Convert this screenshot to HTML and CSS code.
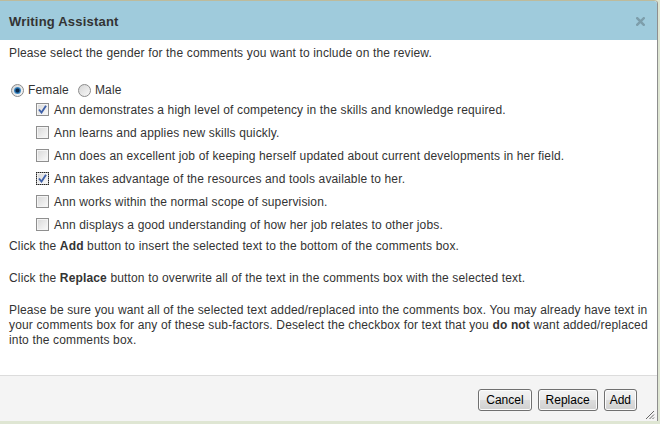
FILE: index.html
```html
<!DOCTYPE html>
<html lang="en">
<head>
<meta charset="utf-8">
<title>Writing Assistant</title>
<link rel="stylesheet" href="styles.css">
</head>
<body>
<div class="dialog">
  <div class="titlebar">
    <span class="title">Writing Assistant</span>
    <svg class="close" width="9" height="9" viewBox="0 0 9 9"><path d="M1.2 1.2 L7.8 7.8 M7.8 1.2 L1.2 7.8" stroke="#7d9eab" stroke-width="2.4" stroke-linecap="square"/></svg>
  </div>
  <div class="content">
    <p class="intro">Please select the gender for the comments you want to include on the review.</p>
    <div class="gender">
      <span class="radio checked"><span class="dot"></span></span>
      <span class="rlabel">Female</span>
      <span class="radio"></span>
      <span class="rlabel">Male</span>
    </div>
    <ul class="options">
      <li class="opt"><span class="cb checked"><svg width="9" height="9" viewBox="0 0 9 9"><path d="M1 4.5 L3.5 7.5 L8 0.8" fill="none" stroke="#3d5fa8" stroke-width="1.9"/></svg></span>Ann demonstrates a high level of competency in the skills and knowledge required.</li>
      <li class="opt"><span class="cb"></span>Ann learns and applies new skills quickly.</li>
      <li class="opt"><span class="cb"></span>Ann does an excellent job of keeping herself updated about current developments in her field.</li>
      <li class="opt"><span class="cb checked focus"><svg width="9" height="9" viewBox="0 0 9 9"><path d="M1 4.5 L3.5 7.5 L8 0.8" fill="none" stroke="#3d5fa8" stroke-width="1.9"/></svg></span>Ann takes advantage of the resources and tools available to her.</li>
      <li class="opt"><span class="cb"></span>Ann works within the normal scope of supervision.</li>
      <li class="opt"><span class="cb"></span>Ann displays a good understanding of how her job relates to other jobs.</li>
    </ul>
    <p class="note first">Click the <b>Add</b> button to insert the selected text to the bottom of the comments box.</p>
    <p class="note">Click the <b>Replace</b> button to overwrite all of the text in the comments box with the selected text.</p>
    <p class="note">Please be sure you want all of the selected text added/replaced into the comments box. You may already have text in your comments box for any of these sub-factors. Deselect the checkbox for text that you <b>do not</b> want added/replaced into the comments box.</p>
  </div>
  <div class="footer">
    <button class="btn">Cancel</button>
    <button class="btn">Replace</button>
    <button class="btn narrow">Add</button>
    <svg class="grip" width="11" height="11" viewBox="0 0 11 11"><path d="M10 2 L2 10 M10 5.5 L5.5 10 M10 8.5 L8.5 10" stroke="#666" stroke-width="1"/></svg>
  </div>
</div>
</body>
</html>
```
FILE: styles.css
```css
html, body {
  margin: 0;
  padding: 0;
}
body {
  width: 660px;
  height: 424px;
  overflow: hidden;
  background: #dfe6d3;
  font-family: "Liberation Sans", Arial, sans-serif;
  font-size: 12px;
  color: #333;
}
.dialog {
  width: 657px;
  height: 420px;
  background: #fff;
  border-top: 1px solid #bdbb9c;
  border-right: 1px solid #8e8e8e;
  border-top-right-radius: 4px;
  display: flex;
  flex-direction: column;
  overflow: hidden;
  position: relative;
}
.titlebar {
  height: 39px;
  flex: none;
  background: #9fcbdc;
  display: flex;
  align-items: center;
  justify-content: space-between;
  padding: 0 12px 0 9px;
}
.title {
  font-weight: bold;
  font-size: 13px;
  letter-spacing: 0.2px;
  color: #333;
  margin-top: 1px;
}
.close {
  display: block;
  margin-top: 1px;
}
.content {
  flex: 1;
  padding: 6px 9px 0 9px;
  letter-spacing: 0.15px;
}
p {
  margin: 0;
}
.intro {
  line-height: 15px;
}
.gender {
  margin-top: 21px;
  height: 16px;
  display: flex;
  align-items: center;
  padding-left: 2px;
}
.radio {
  width: 11px;
  height: 11px;
  border: 1px solid #8b8b8b;
  border-radius: 50%;
  background: linear-gradient(135deg, #d6d6d6, #f8f8f8);
  display: flex;
  align-items: center;
  justify-content: center;
  flex: none;
}
.radio .dot {
  width: 7px;
  height: 7px;
  border-radius: 50%;
  background: radial-gradient(circle at 50% 50%, #0b2a4a 0 1.5px, #2a78b8 2.5px, #7fc0e8 100%);
}
.rlabel {
  margin-left: 4px;
  margin-right: 9px;
  color: #333;
}
.options {
  list-style: none;
  margin: 0;
  padding: 0 0 0 27px;
}
.opt {
  height: 23px;
  display: flex;
  align-items: center;
}
.cb {
  width: 11px;
  height: 11px;
  border: 1px solid #8f8f8f;
  background: linear-gradient(135deg, #d8d8d8, #fafafa);
  box-shadow: inset 0 0 0 1px #f4f4f4;
  margin-right: 5px;
  display: flex;
  align-items: center;
  justify-content: center;
  flex: none;
}
.cb svg {
  display: block;
}
.cb.focus {
  outline: 1px dotted #222;
  outline-offset: -1px;
}
.note {
  line-height: 15px;
  margin-top: 17px;
}
.note.first {
  margin-top: 3px;
}
.note b {
  color: #333;
}
.footer {
  flex: none;
  height: 46px;
  border-top: 1px solid #dcdcdc;
  background: #f4f4f4;
  display: flex;
  justify-content: flex-end;
  align-items: flex-start;
  gap: 6px;
  padding: 13px 20px 0 0;
  box-sizing: border-box;
  position: relative;
}
.btn {
  height: 22px;
  padding: 0 7px;
  font-family: "Liberation Sans", Arial, sans-serif;
  font-size: 12px;
  color: #000;
  border: 1px solid #707070;
  border-radius: 3px;
  background: linear-gradient(#f3f3f3 0%, #ebebeb 50%, #dddddd 51%, #d0d0d0 100%);
  box-shadow: inset 0 0 0 1px #fcfcfc;
}
.btn.narrow {
  padding: 0 5px;
}
.grip {
  position: absolute;
  right: 2px;
  bottom: 1px;
}
```
